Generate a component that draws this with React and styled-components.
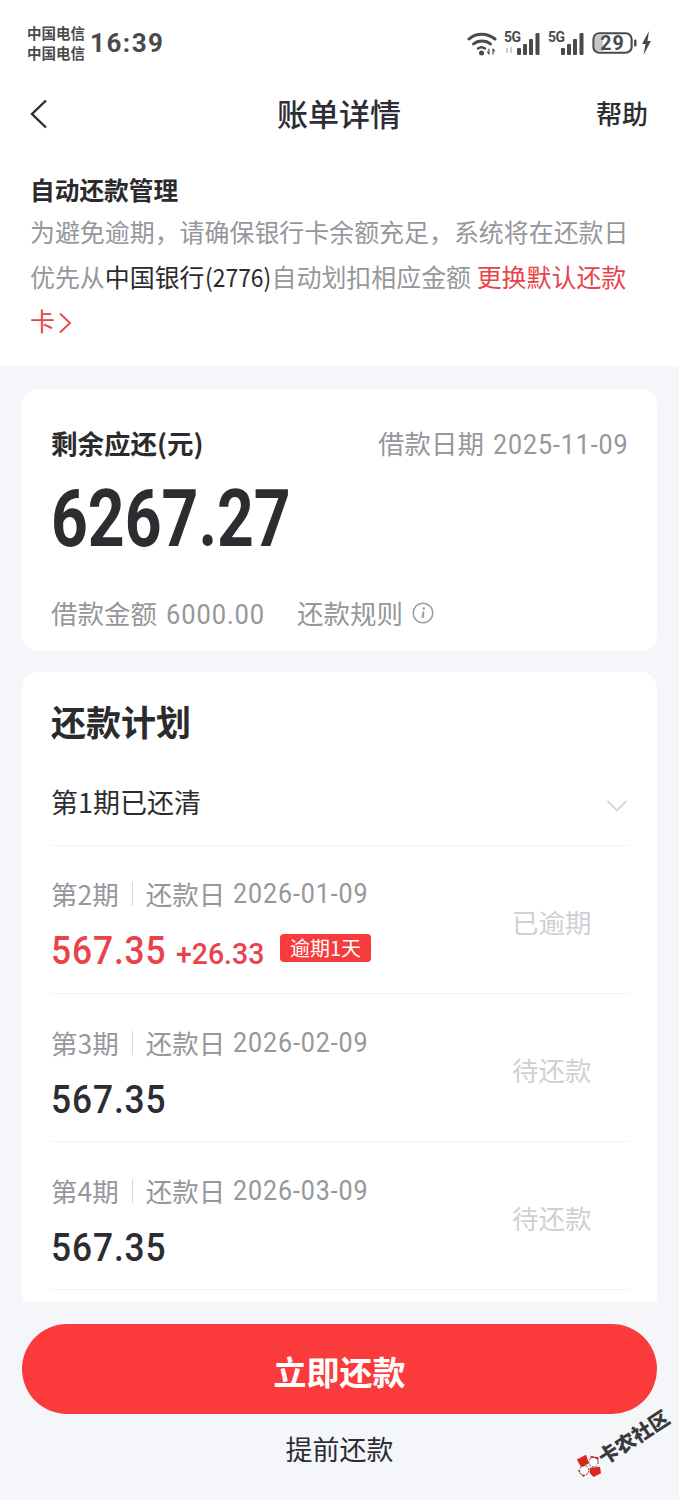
import React from "react";
import styled, { createGlobalStyle } from "styled-components";

const CJK = `"Noto Sans CJK SC", "Noto Sans", sans-serif`;
const DIGITS = `"Roboto", "Noto Sans CJK SC", sans-serif`;

const GlobalStyle = createGlobalStyle`
    html, body {
        margin: 0;
        padding: 0;
        background: #f5f6fa;
    }
    body {
        font-family: ${CJK};
    }
`;

const Screen = styled.div`
    position: relative;
    width: 679px;
    height: 1500px;
    display: flex;
    flex-direction: column;
    overflow: hidden;
    background: #f5f6fa;
    color: #2c2d31;
`;

const StatusBar = styled.div`
    height: 86px;
    box-sizing: border-box;
    padding: 0 27px 0 27px;
    display: flex;
    align-items: center;
    justify-content: space-between;
    background: #fff;
    color: #4a4a4c;
`;

const StatusLeft = styled.div`
    display: flex;
    align-items: center;
    gap: 5px;
`;

const Carriers = styled.div`
    font-size: 14.500px;
    font-weight: 700;
    line-height: 20px;
`;

const Clock = styled.div`
    font-family: "Roboto", sans-serif;
    font-size: 26px;
    font-weight: 700;
    letter-spacing: 1.500px;
`;

const StatusRight = styled.div`
    display: flex;
    align-items: center;
    gap: 4px;
`;

const NavBar = styled.div`
    height: 56px;
    box-sizing: border-box;
    padding: 0 31px 4px 30px;
    display: grid;
    grid-template-columns: 1fr auto 1fr;
    align-items: center;
    background: #fff;
`;

const BackButton = styled.div`
    display: flex;
    align-items: center;
    padding-top: 4px;
`;

const NavTitle = styled.div`
    font-size: 31px;
    font-weight: 500;
    color: #2c2d35;
`;

const NavHelp = styled.div`
    justify-self: end;
    font-size: 26px;
    font-weight: 500;
    color: #2c2d31;
`;

const Notice = styled.div`
    background: #fff;
    padding: 33px 45px 0 30px;
    height: 224px;
    box-sizing: border-box;
`;

const NoticeTitle = styled.div`
    font-size: 24.700px;
    font-weight: 700;
    line-height: 28px;
    color: #2b2b2e;
`;

const NoticeText = styled.div`
    margin-top: 6px;
    font-size: 24.950px;
    line-height: 44.500px;
    color: #96979c;
`;

const BankName = styled.span`
    color: #2b2b2e;
`;

const ChangeLink = styled.span`
    color: #e8434a;
`;

const ChevronSlot = styled.span`
    display: inline-block;
    margin-left: 3px;
    vertical-align: -3px;
`;

const Content = styled.div`
    flex: 1;
    min-height: 0;
    overflow: hidden;
    padding: 23px 22px 0;
    display: flex;
    flex-direction: column;
    gap: 21px;
`;

const Card = styled.div`
    flex: none;
    background: #fff;
    border-radius: 16px;
`;

const SummaryCard = styled(Card)`
    height: 262px;
    box-sizing: border-box;
    padding: 33px 30px 0 29px;
`;

const SummaryTop = styled.div`
    display: flex;
    justify-content: space-between;
    align-items: center;
    height: 40px;
`;

const SummaryLabel = styled.div`
    font-size: 26.500px;
    font-weight: 700;
    color: #2b2b2e;
`;

const MetaText = styled.div`
    font-size: 26.500px;
    color: #96979c;
    white-space: nowrap;
`;

// the app's digits are a narrow DIN-like face, so Roboto gets squeezed into the measured width
const Squeezed = styled.span`
    display: inline-block;
    width: ${(p) => p.$w}px;
    white-space: nowrap;
    transform: scaleX(${(p) => p.$sx});
    transform-origin: left center;
`;

const MetaDigits = styled(Squeezed)`
    margin-left: ${(p) => p.$gap || 3}px;
    font-family: ${DIGITS};
    font-size: 28px;
    letter-spacing: 1px;
`;

const BigAmount = styled.div`
    margin-top: 14px;
    font-family: ${DIGITS};
    font-size: 79px;
    line-height: 86px;
    font-weight: 700;
    color: #2c2d31;
`;

const SummaryBottom = styled.div`
    margin-top: 31px;
    display: flex;
    align-items: center;
    gap: 32px;
`;

const RuleLink = styled(MetaText)`
    display: flex;
    align-items: center;
    gap: 9px;
`;

const PlanCard = styled(Card)`
    flex: 1;
    padding: 24px 29px 0;
    border-radius: 16px 16px 0 0;
`;

const PlanTitle = styled.div`
    font-size: 35px;
    font-weight: 700;
    line-height: 49px;
    color: #2b2b2e;
`;

const PaidRow = styled.div`
    height: 101px;
    box-sizing: border-box;
    padding-top: 12px;
    display: flex;
    align-items: center;
    justify-content: space-between;
    font-size: 27px;
    color: #2c2d31;
    border-bottom: 1px solid #f1f2f4;
`;

const PaidChevron = styled.span`
    display: flex;
    margin-top: 10px;
`;

const PeriodRow = styled.div`
    height: 148px;
    box-sizing: border-box;
    padding-top: 13px;
    display: flex;
    align-items: center;
    justify-content: space-between;
    border-bottom: 1px solid #f1f2f4;
`;

const PeriodInfo = styled.div`
    display: flex;
    flex-direction: column;
    gap: 16px;
`;

const PeriodMeta = styled(MetaText)`
    display: flex;
    align-items: center;
    line-height: 36px;
`;

const Divider = styled.span`
    width: 1px;
    height: 24px;
    margin: 0 13px;
    background: #d8d9dc;
`;

const AmountLine = styled.div`
    display: flex;
    align-items: baseline;
    line-height: 46px;
    color: ${(p) => (p.$overdue ? "#e8434a" : "#2c2d31")};
`;

const Amount = styled(Squeezed)`
    font-family: ${DIGITS};
    font-size: 39px;
    font-weight: 500;
    letter-spacing: 1px;
`;

const Extra = styled(Squeezed)`
    margin-left: 11px;
    font-family: ${DIGITS};
    font-size: 29px;
    font-weight: 500;
`;

const OverdueTag = styled.span`
    align-self: center;
    margin: 0 0 8px 17px;
    height: 28px;
    padding: 0 10px;
    border-radius: 4px;
    background: #f73a3c;
    color: #fff;
    font-size: 20px;
    line-height: 28px;
    white-space: nowrap;
`;

const PeriodStatus = styled.div`
    width: 116px;
    margin-bottom: 9px;
    font-size: 26.500px;
    color: #cfd0d3;
`;

const Footer = styled.div`
    flex: none;
    height: 198px;
    box-sizing: border-box;
    padding: 22px 22px 0;
    background: #f5f6fa;
    display: flex;
    flex-direction: column;
    align-items: stretch;
`;

const PayButton = styled.div`
    height: 90px;
    box-sizing: border-box;
    padding-top: 3px;
    border-radius: 45px;
    background: #fb3b3b;
    color: #fff;
    font-size: 33px;
    font-weight: 700;
    display: flex;
    align-items: center;
    justify-content: center;
`;

const EarlyPay = styled.div`
    margin-top: 13px;
    font-size: 27px;
    line-height: 44px;
    text-align: center;
    color: #2c2d31;
`;

const Watermark = styled.div`
    position: absolute;
    left: 578px;
    top: 1460px;
    display: flex;
    align-items: center;
    transform: rotate(-33deg);
    transform-origin: left center;
    font-size: 20px;
    line-height: 26px;
    font-weight: 900;
    color: #3a3a3c;
    white-space: nowrap;
`;

function WifiIcon() {
    return (
        <svg width="33" height="26" viewBox="0 0 33 26" fill="none" stroke="#4a4a4c" strokeLinecap="round">
            <path d="M2 9C9 2.500 20 2.500 28 9" strokeWidth="3" />
            <path d="M6.500 14C11 10 19 10 23.500 14" strokeWidth="3" />
            <path d="M11 18.500C13 17 16 17 18 18.500" strokeWidth="2.500" />
            <circle cx="14.500" cy="23" r="2.500" fill="#4a4a4c" stroke="none" />
            <path d="M22 19v5M20.500 22l1.500 2M26 24v-5M26 19l1.500 2" strokeWidth="1.200" />
        </svg>
    );
}

function SignalIcon({ dim }) {
    return (
        <svg width="40" height="26" viewBox="0 0 40 26" fill="#4a4a4c">
            <text x="0" y="12" fontSize="14" fontWeight="700" fontFamily="Roboto, sans-serif" letterSpacing="-0.5">5G</text>
            {dim && <path d="M3 18v5M7 17v6" stroke="#bbb" strokeWidth="1.500" />}
            <rect x="13" y="18" width="4" height="7" rx="1" />
            <rect x="19" y="14" width="4" height="11" rx="1" />
            <rect x="25" y="9" width="4" height="16" rx="1" />
            <rect x="31.500" y="3" width="4" height="22" rx="1" />
        </svg>
    );
}

function BatteryIcon() {
    return (
        <svg width="45" height="24" viewBox="0 0 46 24">
            <rect x="1.500" y="2" width="39" height="20" rx="6" fill="#fff" stroke="#4a4a4c" strokeWidth="2.200" />
            <path d="M3 8a5 5 0 0 1 5-5h3v18H8a5 5 0 0 1-5-5z" fill="#c6c6c8" />
            <rect x="43" y="8.500" width="2.500" height="7" rx="1" fill="#4a4a4c" />
            <text x="21" y="19" textAnchor="middle" fontSize="20" fontWeight="700" fontFamily="Roboto, sans-serif" letterSpacing="1" fill="#4a4a4c">29</text>
        </svg>
    );
}

function BoltIcon() {
    return (
        <svg width="11" height="24" viewBox="0 0 11 24" fill="#4a4a4c">
            <path d="M8 0L1 13h3.500L2.500 24 10 10H6.500z" />
        </svg>
    );
}

function BackIcon() {
    return (
        <svg width="18" height="30" viewBox="0 0 18 30" fill="none" stroke="#2c2d31" strokeWidth="2.400">
            <path d="M16 1.500L2 15l14 13.500" />
        </svg>
    );
}

function InfoIcon() {
    return (
        <svg width="22" height="22" viewBox="0 0 22 22" fill="none" stroke="#9a9ba0">
            <circle cx="11" cy="11" r="9.800" strokeWidth="1.500" />
            <path d="M11.500 9.500L10.500 16" strokeWidth="2" />
            <circle cx="11.800" cy="6.500" r="1.200" fill="#9a9ba0" stroke="none" />
        </svg>
    );
}

function ChevronDown() {
    return (
        <svg width="22" height="14" viewBox="0 0 22 14" fill="none" stroke="#d5d6d9" strokeWidth="1.800">
            <path d="M1.500 2L11 11.500 20.500 2" />
        </svg>
    );
}

function LinkChevron() {
    return (
        <svg width="14" height="22" viewBox="0 0 14 22" fill="none" stroke="#e8434a" strokeWidth="1.800">
            <path d="M2 1.500L12 11 2 20.500" />
        </svg>
    );
}

function WatermarkLogo() {
    return (
        <svg width="26" height="26" viewBox="0 0 28 26">
            <g transform="rotate(33 14 13)">
                <path d="M1 6L11 1l3 9-8 5zM15 15l11-1 1 7-8 4-4-4z" fill="#d8281f" />
                <path d="M16 2l9 2-3 6-7 1zM2 18l9-3 3 5-6 5z" fill="#d8281f" />
                <circle cx="19" cy="9" r="5" fill="#fff" stroke="#333" strokeDasharray="2 1.500" />
                <circle cx="9" cy="18" r="5" fill="#fff" stroke="#333" strokeDasharray="2 1.500" />
            </g>
        </svg>
    );
}

const PERIODS = [
    { no: 2, date: "2026-01-09", status: "已逾期", overdue: true },
    { no: 3, date: "2026-02-09", status: "待还款" },
    { no: 4, date: "2026-03-09", status: "待还款" },
];

export default function App() {
    return (
        <Screen>
            <GlobalStyle />
            <StatusBar>
                <StatusLeft>
                    <Carriers>
                        中国电信
                        <br />
                        中国电信
                    </Carriers>
                    <Clock>16:39</Clock>
                </StatusLeft>
                <StatusRight>
                    <WifiIcon />
                    <SignalIcon dim />
                    <SignalIcon />
                    <BatteryIcon />
                    <BoltIcon />
                </StatusRight>
            </StatusBar>
            <NavBar>
                <BackButton>
                    <BackIcon />
                </BackButton>
                <NavTitle>账单详情</NavTitle>
                <NavHelp>帮助</NavHelp>
            </NavBar>
            <Notice>
                <NoticeTitle>自动还款管理</NoticeTitle>
                <NoticeText>
                    为避免逾期，请确保银行卡余额充足，系统将在还款日优先从
                    <BankName>
                        中国银行<Squeezed $w={67} $sx={0.918}>(2776)</Squeezed>
                    </BankName>
                    自动划扣相应金额 <ChangeLink>更换默认还款卡</ChangeLink>
                    <ChevronSlot>
                        <LinkChevron />
                    </ChevronSlot>
                </NoticeText>
            </Notice>
            <Content>
                <SummaryCard>
                    <SummaryTop>
                        <SummaryLabel>剩余应还(元)</SummaryLabel>
                        <MetaText>
                            借款日期 <MetaDigits $w={134} $sx={0.895}>2025-11-09</MetaDigits>
                        </MetaText>
                    </SummaryTop>
                    <BigAmount>
                        <Squeezed $w={238} $sx={0.813}>6267.27</Squeezed>
                    </BigAmount>
                    <SummaryBottom>
                        <MetaText>
                            借款金额 <MetaDigits $w={99} $sx={0.91}>6000.00</MetaDigits>
                        </MetaText>
                        <RuleLink>
                            还款规则
                            <InfoIcon />
                        </RuleLink>
                    </SummaryBottom>
                </SummaryCard>
                <PlanCard>
                    <PlanTitle>还款计划</PlanTitle>
                    <PaidRow>
                        第1期已还清
                        <PaidChevron>
                            <ChevronDown />
                        </PaidChevron>
                    </PaidRow>
                    {PERIODS.map((p) => (
                        <PeriodRow key={p.no}>
                            <PeriodInfo>
                                <PeriodMeta>
                                    第{p.no}期
                                    <Divider />
                                    还款日
                                    <MetaDigits $w={135} $sx={0.895} $gap={8}>{p.date}</MetaDigits>
                                </PeriodMeta>
                                <AmountLine $overdue={p.overdue}>
                                    <Amount $w={114} $sx={0.905}>567.35</Amount>
                                    {p.overdue && <Extra $w={87} $sx={0.98}>+26.33</Extra>}
                                    {p.overdue && <OverdueTag>逾期1天</OverdueTag>}
                                </AmountLine>
                            </PeriodInfo>
                            <PeriodStatus>{p.status}</PeriodStatus>
                        </PeriodRow>
                    ))}
                </PlanCard>
            </Content>
            <Footer>
                <PayButton>立即还款</PayButton>
                <EarlyPay>提前还款</EarlyPay>
            </Footer>
            <Watermark>
                <WatermarkLogo />
                卡农社区
            </Watermark>
        </Screen>
    );
}
